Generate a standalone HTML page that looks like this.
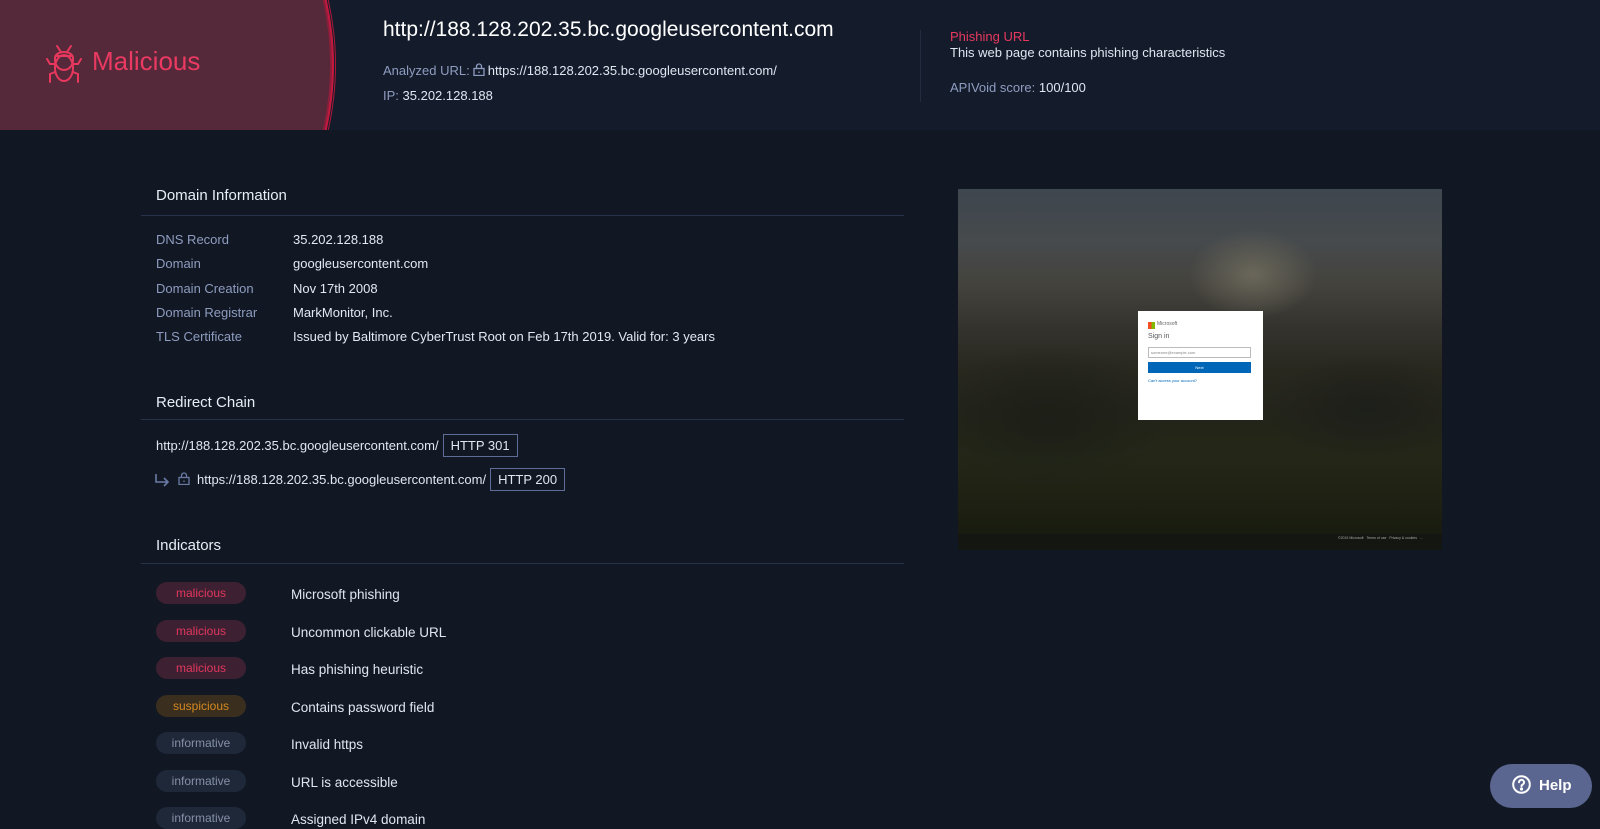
<!DOCTYPE html>
<html><head><meta charset="utf-8"><style>
*{margin:0;padding:0;box-sizing:border-box}
body{width:1600px;height:817px;overflow:hidden;background:#111823;font-family:"Liberation Sans",sans-serif;color:#dfe6f2;position:relative}
.hdr{position:absolute;left:0;top:0;width:1600px;height:130px;background:#141c2b;overflow:hidden}
.blob{position:absolute;left:-480px;top:-280px;width:810px;height:690px;border-radius:50%;background:#55283a;box-shadow:2px 0 0 #8a1f3c,4px 0 0 #c4193f,5px 0 0 #141c2b,6px 0 0 #b0173a}
.abs{position:absolute;white-space:nowrap}
.lab{color:#8e9cc0}
.h{font-size:15px;color:#e8edf6}
.line{position:absolute;left:141px;width:763px;height:1px;background:#26324a}
.k{position:absolute;left:156px;font-size:13px;color:#8e9cc0}
.v{position:absolute;left:293px;font-size:13px;color:#e3e8f2}
.b{position:absolute;left:156px;width:90px;height:22px;border-radius:11px;font-size:12px;text-align:center;line-height:22px}
.m{background:#3d2132;color:#e2365e}.s{background:#3a2e1f;color:#d48a20}.i{background:#1e2839;color:#8590a8}
.t{position:absolute;left:291px;font-size:13.5px;color:#dfe6f2}
.tag{display:inline-block;border:1px solid #5d6d97;padding:3px 7px;font-size:13px;margin-left:4px}
.lock{display:inline-block;vertical-align:-1px;margin:0 3px}
</style></head><body>
<div class="hdr"><div class="blob"></div></div>
<svg class="abs" style="left:46px;top:44px" width="36" height="40" viewBox="0 0 36 40" fill="none" stroke="#e8385e" stroke-width="2" stroke-linecap="round"><path d="M11 2l4 6M25 2l-4 6M11 12h14M9 16a9 10 0 0 0 18 0v-2a9 6 0 0 0-18 0z"/><ellipse cx="18" cy="24" rx="9" ry="13"/><path d="M9 20H4L1 15M27 20h5l3-5M9 28l-5 2v8M27 28l5 2v8"/></svg>
<div class="abs" style="left:92px;top:46px;font-size:26px;color:#ea3a62">Malicious</div>
<div class="abs" style="left:383px;top:18px;font-size:21px;color:#fff">http://188.128.202.35.bc.googleusercontent.com</div>
<div class="abs" style="left:383px;top:63px;font-size:13px"><span class="lab">Analyzed URL:</span><svg class="lock" width="12" height="13" viewBox="0 0 12 13" fill="none" stroke="#8e9cc0" stroke-width="1.3"><rect x="1" y="5.5" width="10" height="7"/><path d="M3.5 5.5V3.5a2.5 2.5 0 0 1 5 0v2"/><path d="M6 8.5v1.5"/></svg>https://188.128.202.35.bc.googleusercontent.com/</div>
<div class="abs" style="left:383px;top:88px;font-size:13px"><span class="lab">IP:</span> 35.202.128.188</div>
<div class="abs" style="left:920px;top:30px;width:1px;height:72px;background:#222c3e"></div>
<div class="abs" style="left:950px;top:29px;font-size:13px;color:#e8385e">Phishing URL</div>
<div class="abs" style="left:950px;top:45px;font-size:13px">This web page contains phishing characteristics</div>
<div class="abs" style="left:950px;top:80px;font-size:13px"><span class="lab">APIVoid score:</span> 100/100</div>

<div class="abs h" style="left:156px;top:187px">Domain Information</div>
<div class="line" style="top:215px"></div>
<div class="k" style="top:232px">DNS Record</div><div class="v" style="top:232px">35.202.128.188</div>
<div class="k" style="top:256px">Domain</div><div class="v" style="top:256px">googleusercontent.com</div>
<div class="k" style="top:281px">Domain Creation</div><div class="v" style="top:281px">Nov 17th 2008</div>
<div class="k" style="top:305px">Domain Registrar</div><div class="v" style="top:305px">MarkMonitor, Inc.</div>
<div class="k" style="top:329px">TLS Certificate</div><div class="v" style="top:329px">Issued by Baltimore CyberTrust Root on Feb 17th 2019. Valid for: 3 years</div>

<div class="abs h" style="left:156px;top:394px">Redirect Chain</div>
<div class="line" style="top:419px"></div>
<div class="abs" style="left:156px;top:434px;font-size:13px">http://188.128.202.35.bc.googleusercontent.com/<span class="tag">HTTP 301</span></div>
<div class="abs" style="left:154px;top:468px;font-size:13px"><svg class="lock" style="margin:0 4px 0 0;vertical-align:-3px" width="16" height="14" viewBox="0 0 16 14" fill="none" stroke="#6a7aa5" stroke-width="1.6"><path d="M2 1v8h12M10 5l4 4-4 4"/></svg><svg class="lock" style="margin:0 7px 0 4px" width="12" height="13" viewBox="0 0 12 13" fill="none" stroke="#6a7aa5" stroke-width="1.3"><rect x="1" y="5.5" width="10" height="7"/><path d="M3.5 5.5V3.5a2.5 2.5 0 0 1 5 0v2"/><path d="M6 8.5v1.5"/></svg>https://188.128.202.35.bc.googleusercontent.com/<span class="tag">HTTP 200</span></div>

<div class="abs h" style="left:156px;top:537px">Indicators</div>
<div class="line" style="top:563px"></div>
<div class="b m" style="top:582px">malicious</div><div class="t" style="top:587px">Microsoft phishing</div>
<div class="b m" style="top:620px">malicious</div><div class="t" style="top:625px">Uncommon clickable URL</div>
<div class="b m" style="top:657px">malicious</div><div class="t" style="top:662px">Has phishing heuristic</div>
<div class="b s" style="top:695px">suspicious</div><div class="t" style="top:700px">Contains password field</div>
<div class="b i" style="top:732px">informative</div><div class="t" style="top:737px">Invalid https</div>
<div class="b i" style="top:770px">informative</div><div class="t" style="top:775px">URL is accessible</div>
<div class="b i" style="top:807px">informative</div><div class="t" style="top:812px">Assigned IPv4 domain</div>

<div class="abs" style="left:958px;top:189px;width:484px;height:361px;overflow:hidden;background:linear-gradient(180deg,#3e464e 0%,#464a4c 15%,#44423c 27%,#34332e 38%,#28281f 50%,#23241a 62%,#242717 75%,#1d2012 88%,#16180f 100%)">
<div class="abs" style="left:230px;top:40px;width:130px;height:90px;border-radius:50%;background:radial-gradient(#6a675a,transparent 70%)"></div>
<div class="abs" style="left:-40px;top:150px;width:260px;height:160px;border-radius:50%;background:radial-gradient(#1d1f18,transparent 65%)"></div>
<div class="abs" style="left:300px;top:160px;width:220px;height:120px;border-radius:50%;background:radial-gradient(#1e1f1a,transparent 65%)"></div>
<div class="abs" style="left:0;top:345px;width:484px;height:16px;background:#141612"></div>
<div class="abs" style="left:380px;top:347px;font-size:3.5px;color:#aaa">©2019 Microsoft &nbsp; Terms of use &nbsp; Privacy &amp; cookies &nbsp; ...</div>
<div class="abs" style="left:180px;top:122px;width:125px;height:109px;background:#fff">
<div class="abs" style="left:10px;top:11px;width:7px;height:7px;background:linear-gradient(90deg,#f25022 50%,#7fba00 50%)"></div>
<div class="abs" style="left:19px;top:10px;font-size:5px;color:#666">Microsoft</div>
<div class="abs" style="left:10px;top:22px;font-size:7px;color:#555">Sign in</div>
<div class="abs" style="left:10px;top:36px;width:103px;height:11px;border:1px solid #bbb;font-size:4px;color:#888;padding:2px">someone@example.com</div>
<div class="abs" style="left:10px;top:51px;width:103px;height:11px;background:#0067b8;font-size:4px;color:#fff;text-align:center;line-height:11px">Next</div>
<div class="abs" style="left:10px;top:67px;font-size:4px;color:#0067b8">Can't access your account?</div>
</div></div>

<div class="abs" style="left:1490px;top:764px;width:102px;height:44px;border-radius:22px;background:#5a6590;color:#fff;font-weight:bold;font-size:15px;line-height:44px;padding-left:22px"><svg style="vertical-align:-4px;margin-right:8px" width="19" height="19" viewBox="0 0 19 19" fill="none" stroke="#fff" stroke-width="2"><circle cx="9.5" cy="9.5" r="8.3"/><path d="M7 7.3a2.5 2.5 0 1 1 3.5 2.3c-.8.4-1 .9-1 1.7" stroke-linecap="round"/><circle cx="9.5" cy="14" r=".6" fill="#fff"/></svg>Help</div>
</body></html>
